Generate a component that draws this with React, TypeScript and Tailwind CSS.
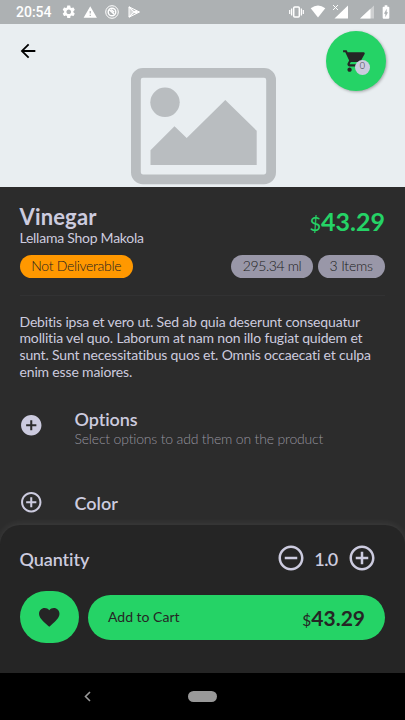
import type { ReactNode } from "react";
import {
  MdAddCircle,
  MdAddCircleOutline,
  MdArrowBack,
  MdBatteryChargingFull,
  MdFavorite,
  MdRemoveCircleOutline,
  MdSettings,
  MdShoppingCart,
  MdVibration,
  MdWarning,
} from "react-icons/md";

function StatusBar() {
  return (
    <div className="flex h-[23.5px] shrink-0 items-center bg-[#adb1b3] pl-4 text-white">
      <span className="w-[45px] font-[Roboto] text-[14px] leading-none font-medium">20:54</span>
      <MdSettings className="size-[15.5px] shrink-0" />
      <MdWarning className="ml-[6.5px] size-[14.5px] shrink-0" />
      <svg className="ml-[7.5px] size-[14px] shrink-0" viewBox="0 0 14 14" fill="none" stroke="currentColor">
        <circle cx="7" cy="7" r="6.3" strokeWidth="1" />
        <circle cx="7" cy="7" r="3.8" strokeWidth="1.4" />
        <path d="M4.3 4.7 9.5 9.5M6.2 4.6l3 2.7" strokeWidth="1.3" />
      </svg>
      <svg className="ml-[9px] size-[12px] shrink-0" viewBox="0 0 12 12" fill="none" stroke="currentColor">
        <path d="M1 .8v10.4L11.5 6Z" strokeWidth="1" />
        <path d="m1 .8 6.5 6.6M1 11.2l6.5-6.6" strokeWidth="1.2" />
        <path d="M1 1v10l5-5Z" fill="currentColor" fillOpacity=".5" stroke="none" />
        <path d="m7.5 4.5 4 1.5-4 1.5L6 6Z" fill="currentColor" stroke="none" />
      </svg>
      <svg className="ml-[149px] h-[12px] w-[15px] shrink-0" viewBox="0 0 15 12" fill="none" stroke="currentColor">
        <rect x="4.7" y="1" width="5.6" height="10" rx="1" strokeWidth="1.5" />
        <path d="M2.6 2.4v7.2M12.4 2.4v7.2" strokeWidth="1.3" />
        <path d="M.7 4v4M14.3 4v4" strokeWidth="1.2" />
      </svg>
      <svg className="ml-[6px] h-[13px] w-4 shrink-0" viewBox="0 0 16 13" fill="currentColor">
        <path d="M.7 3.3Q8-2.2 15.3 3.3L8 12.5Z" />
      </svg>
      <svg className="ml-[5.5px] h-[15px] w-4 shrink-0" viewBox="0 0 16 15">
        <path d="M16 1.5V14.5H2.5Z" fill="currentColor" />
        <path d="m1 1 5 5M6 1 1 6" stroke="currentColor" strokeWidth="1" />
      </svg>
      <svg className="ml-[11px] h-[15px] w-[15px] shrink-0" viewBox="0 0 15 15" fill="currentColor">
        <path d="M15 1.5v13H1Z" opacity=".4" />
        <path d="M11.5 4.7v9.8H1Z" />
      </svg>
      <MdBatteryChargingFull className="ml-[4px] size-[16px] shrink-0" />
    </div>
  );
}

function Hero() {
  return (
    <div className="flex h-[163.5px] shrink-0 items-start justify-between bg-[#e9eef1]">
      <MdArrowBack className="mt-[16.5px] ml-[16.5px] size-[22px] text-black" />
      <svg className="mt-[44.5px] ml-[42px] h-[117px] w-[145px]" viewBox="0 0 145 117">
        <rect x="4.9" y="4.9" width="135.2" height="106.4" rx="7" fill="none" stroke="#b9bdc0" strokeWidth="9.8" />
        <circle cx="34" cy="34.3" r="14.7" fill="#b9bdc0" />
        <path d="M19.5 82.3 43.5 58.3 55.7 70 94.3 32 125.7 62.8V97H19.5Z" fill="#b9bdc0" />
      </svg>
      <button className="relative mt-[7.5px] mr-[19.5px] flex size-[59.5px] items-start rounded-full bg-[#25d366] shadow-[1px_1px_3px_rgba(0,0,0,0.3)]">
        <MdShoppingCart className="mt-[17px] ml-[15.5px] size-[26px] text-[#252525]" />
        <span className="absolute top-[28.5px] left-[28.5px] flex size-[15.5px] items-start justify-center rounded-full bg-[#cccbdf] pt-[1px] text-[9px] leading-[10px] font-light text-[#252525]">
          0
        </span>
      </button>
    </div>
  );
}

function Chip({ className, children }: { className: string; children: ReactNode }) {
  return (
    <span className={`flex h-[23px] items-center justify-center rounded-full pb-px text-[14px] leading-none font-light whitespace-nowrap text-[#202020] ${className}`}>
      {children}
    </span>
  );
}

function Details() {
  return (
    <main className="h-[338px] shrink-0 overflow-hidden bg-[#2c2c2c] pt-[18px] pr-5 pl-[19.5px] text-[#cccbdf]">
      <div className="flex h-[50px] justify-between">
        <div>
          <h1 className="text-[22px] leading-6 font-bold tracking-[0.15px]">Vinegar</h1>
          <p className="text-[14px] leading-[18px] tracking-[-0.25px]">Lellama Shop Makola</p>
        </div>
        <div className="flex h-8 items-baseline text-[#25d366]">
          <span className="text-[20px] leading-8">$</span>
          <span className="text-[25px] leading-8 font-bold">43.29</span>
        </div>
      </div>
      <div className="flex justify-between">
        <Chip className="w-[113.5px] bg-[#ff9800] tracking-[-0.3px]">Not Deliverable</Chip>
        <div className="flex gap-[4.5px]">
          <Chip className="w-[82px] bg-[#9997a8] tracking-[-0.4px]">295.34 ml</Chip>
          <Chip className="w-[67.5px] bg-[#9997a8] tracking-[-0.2px]">3 Items</Chip>
        </div>
      </div>
      <div className="mt-[17px] h-px bg-[#323233]" />
      <p className="mt-[17.5px] text-[14px] leading-[16.7px] tracking-[-0.16px] whitespace-nowrap">
        Debitis ipsa et vero ut. Sed ab quia deserunt consequatur<br />
        mollitia vel quo. Laborum at nam non illo fugiat quidem et<br />
        sunt. Sunt necessitatibus quos et. Omnis occaecati et culpa<br />
        enim esse maiores.
      </p>
      <div className="mt-[28px] flex">
        <MdAddCircle className="mt-[4.5px] -ml-[0.5px] size-[24.5px]" />
        <div className="ml-[31px]">
          <h2 className="text-[18px] leading-[22px] font-semibold tracking-[-0.1px]">Options</h2>
          <p className="text-[14px] leading-[18px] font-light tracking-[-0.18px] text-[#96949f]">Select options to add them on the product</p>
        </div>
      </div>
      <div className="mt-[40.5px] flex">
        <MdAddCircleOutline className="mt-px -ml-[0.5px] size-[24.5px]" />
        <h2 className="mt-[3px] ml-[31px] text-[18px] leading-[22px] font-semibold">Color</h2>
      </div>
    </main>
  );
}

function CartPanel() {
  return (
    <section className="h-[148px] shrink-0 bg-[#2c2c2c]">
      <div className="h-full rounded-t-[20px] bg-[#252525] pt-[18px] pr-5 pl-[19.5px] shadow-[0_-2px_6px_rgba(255,255,255,0.07)]">
        <div className="flex h-[30px] items-center text-[#cccbdf]">
          <span className="pt-px text-[18px] leading-none font-semibold tracking-[-0.1px]">Quantity</span>
          <MdRemoveCircleOutline className="ml-auto size-[30px]" />
          <span className="w-[41px] pt-[2px] text-center text-[18px] leading-none font-semibold tracking-[-0.6px]">1.0</span>
          <MdAddCircleOutline className="mr-[8.5px] size-[30px]" />
        </div>
        <div className="mt-[18px] flex items-center gap-[9px] text-[#252525]">
          <button className="flex h-[52px] w-[59.5px] items-center justify-center rounded-full bg-[#25d366]">
            <MdFavorite className="size-[24.5px]" />
          </button>
          <button className="flex h-[45px] flex-1 items-center justify-between rounded-full bg-[#25d366] px-5">
            <span className="text-[14px] leading-none">Add to Cart</span>
            <span className="flex items-baseline pt-px leading-none">
              <span className="text-[15.5px]">$</span>
              <span className="text-[21px] leading-none font-bold">43.29</span>
            </span>
          </button>
        </div>
      </div>
    </section>
  );
}

function NavigationBar() {
  return (
    <nav className="flex h-[47px] shrink-0 items-center bg-black">
      <svg className="ml-[84px] h-[11px] w-[7px]" viewBox="0 0 7 11" fill="none" stroke="#999" strokeWidth="1.6">
        <path d="M6 1 1.5 5.5 6 10" />
      </svg>
      <span className="ml-[97px] h-[11px] w-[29px] rounded-full bg-[#999]" />
    </nav>
  );
}

export default function App() {
  return (
    <div className="flex h-[720px] w-[405px] flex-col overflow-hidden bg-black font-[Lato,sans-serif] [font-variant-ligatures:none]">
      <StatusBar />
      <Hero />
      <Details />
      <CartPanel />
      <NavigationBar />
    </div>
  );
}
